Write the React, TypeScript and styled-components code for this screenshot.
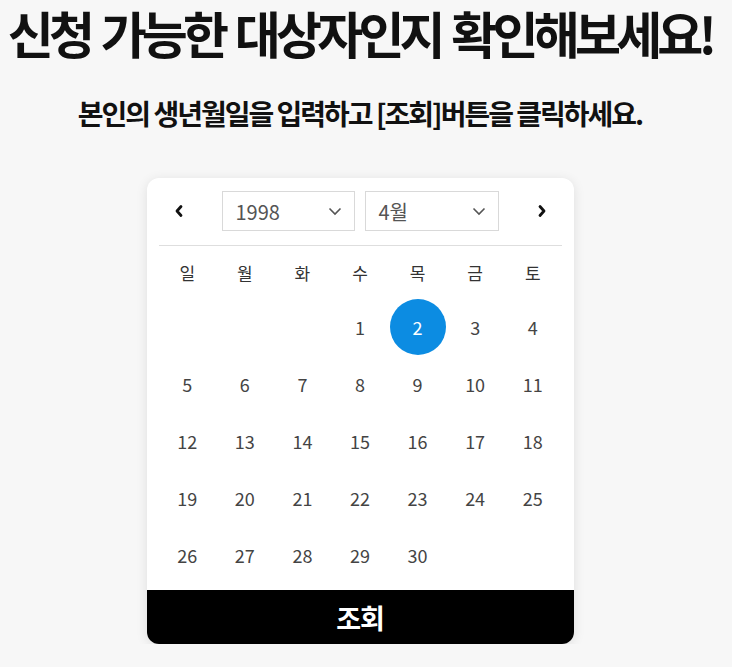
import React from "react";
import styled, { createGlobalStyle } from "styled-components";

const Global = createGlobalStyle`
  html, body { margin: 0; padding: 0; background: #f7f7f7; }
  body { font-family: "Noto Sans CJK KR", "Noto Sans", sans-serif; }
  * { box-sizing: border-box; }
`;

const Page = styled.div`
  width: 100%;
  padding-right: 12px;
  display: flex;
  flex-direction: column;
  align-items: center;
`;

const Title = styled.h1`
  margin: 0;
  font-size: 50px;
  line-height: 64px;
  font-weight: 700;
  letter-spacing: -4.8px;
  word-spacing: 4px;
  color: #111;
  white-space: nowrap;
`;

const Subtitle = styled.p`
  margin: 33px 0 0;
  font-size: 28px;
  line-height: 32px;
  font-weight: 700;
  letter-spacing: -2px;
  color: #111;
  white-space: nowrap;
`;

const Card = styled.div`
  margin-top: 49px;
  width: 427px;
  background: #fff;
  border-radius: 12px;
  box-shadow: 0 2px 12px rgba(0, 0, 0, 0.1);
  overflow: hidden;
`;

const Inner = styled.div`
  padding: 13px 12px 7px;
`;

const Header = styled.div`
  display: flex;
  align-items: center;
  height: 40px;
`;

const NavButton = styled.button`
  width: 40px;
  height: 40px;
  border: 0;
  background: transparent;
  padding: 0;
  display: flex;
  align-items: center;
  justify-content: center;
  color: #111;
`;

const Selects = styled.div`
  flex: 1;
  display: flex;
  justify-content: center;
  gap: 10px;
`;

const SelectBox = styled.div<{ $w: number }>`
  width: ${(p) => p.$w}px;
  height: 40px;
  border: 1px solid #d9d9d9;
  background: #fff;
  display: flex;
  align-items: center;
  justify-content: space-between;
  padding: 0 12px 0 13px;
  font-size: 20px;
  color: #555;
`;

const Divider = styled.div`
  height: 1px;
  background: #dedede;
  margin-top: 14px;
`;

const Grid = styled.div`
  display: grid;
  grid-template-columns: repeat(7, 1fr);
`;

const DayName = styled.div`
  height: 52px;
  display: flex;
  align-items: center;
  justify-content: center;
  font-size: 17px;
  color: #333;
`;

const Cell = styled.div`
  height: 57px;
  display: flex;
  align-items: center;
  justify-content: center;
`;

const DateNum = styled.span<{ $selected?: boolean }>`
  width: 56px;
  height: 56px;
  border-radius: 50%;
  display: flex;
  align-items: center;
  justify-content: center;
  font-size: 18px;
  color: ${(p) => (p.$selected ? "#fff" : "#444")};
  background: ${(p) => (p.$selected ? "#0c8ce2" : "transparent")};
`;

const Submit = styled.button`
  width: 100%;
  height: 54px;
  border: 0;
  background: #000;
  color: #fff;
  font-family: "Noto Sans CJK KR", sans-serif;
  font-size: 27px;
  font-weight: 700;
  letter-spacing: -1px;
  display: block;
`;

const Chevron = ({ dir }: { dir: "left" | "right" }) => (
  <svg width="10" height="14" viewBox="0 0 10 14">
    <path
      d={dir === "left" ? "M7 2.5 L3 7 L7 11.5" : "M3 2.5 L7 7 L3 11.5"}
      fill="none"
      stroke="#111"
      strokeWidth="2.8"
      strokeLinecap="round"
      strokeLinejoin="round"
    />
  </svg>
);

const Caret = () => (
  <svg width="14" height="9" viewBox="0 0 14 9">
    <path d="M1.5 1.5 L7 7 L12.5 1.5" fill="none" stroke="#555" strokeWidth="1.6" />
  </svg>
);

const days = ["일", "월", "화", "수", "목", "금", "토"];

export default function App() {
  const cells: (number | null)[] = [null, null, null];
  for (let d = 1; d <= 30; d++) cells.push(d);
  return (
    <>
      <Global />
      <Page>
        <Title>신청 가능한 대상자인지 확인해보세요!</Title>
        <Subtitle>본인의 생년월일을 입력하고 [조회]버튼을 클릭하세요.</Subtitle>
        <Card>
          <Inner>
            <Header>
              <NavButton aria-label="이전 달">
                <Chevron dir="left" />
              </NavButton>
              <Selects>
                <SelectBox $w={133}>
                  <span>1998</span>
                  <Caret />
                </SelectBox>
                <SelectBox $w={134}>
                  <span>4월</span>
                  <Caret />
                </SelectBox>
              </Selects>
              <NavButton aria-label="다음 달">
                <Chevron dir="right" />
              </NavButton>
            </Header>
            <Divider />
            <Grid>
              {days.map((d) => (
                <DayName key={d}>{d}</DayName>
              ))}
              {cells.map((c, i) => (
                <Cell key={i}>
                  {c !== null && <DateNum $selected={c === 2}>{c}</DateNum>}
                </Cell>
              ))}
            </Grid>
          </Inner>
          <Submit>조회</Submit>
        </Card>
      </Page>
    </>
  );
}
